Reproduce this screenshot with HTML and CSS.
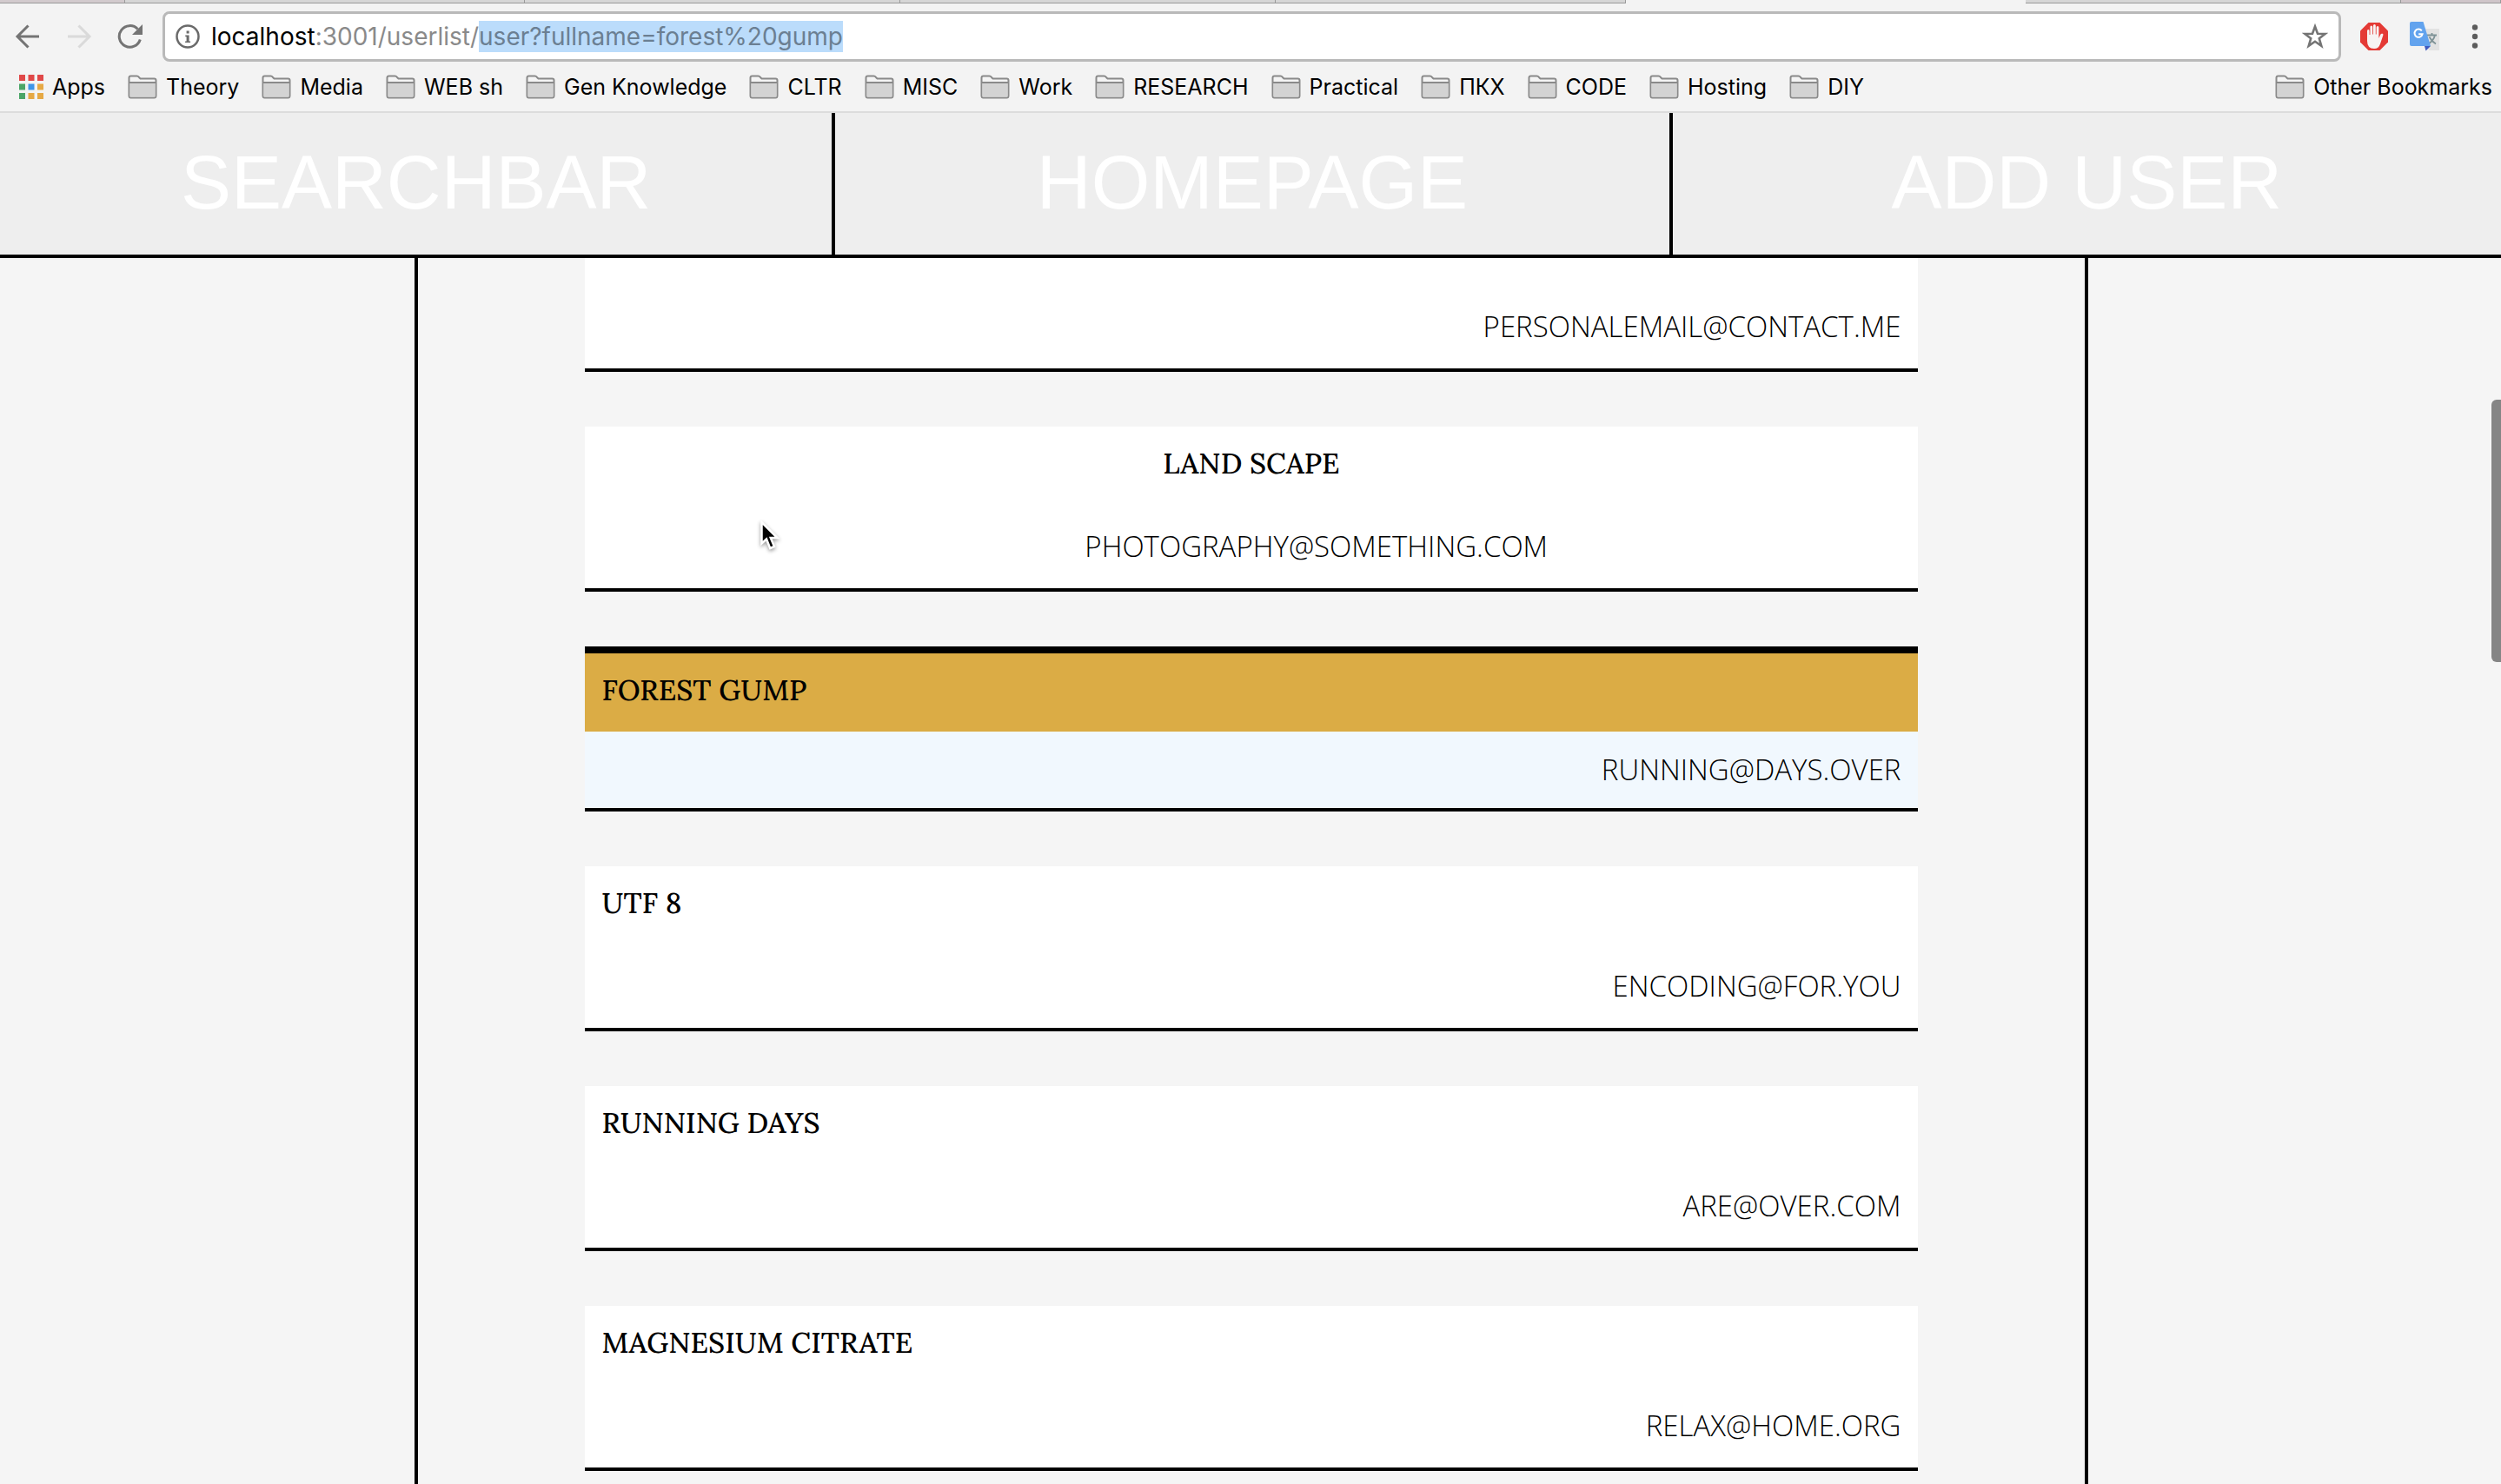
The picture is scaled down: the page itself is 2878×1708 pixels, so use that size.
FILE: index.html
```html
<!DOCTYPE html>
<html lang="en">
<head>
<meta charset="utf-8">
<title>User list</title>
<link rel="stylesheet" href="styles.css">
</head>
<body>
<svg width="0" height="0" class="sprite" aria-hidden="true">
  <symbol id="folder" viewBox="0 0 34 28">
    <path d="M1.5 24V3.5Q1.5 1.5 3.5 1.5H10.500Q12 1.500 13 3L14.500 4.500H30.500Q32.500 4.500 32.500 6.500V24Q32.500 26.500 30.500 26.500H3.500Q1.500 26.500 1.500 24Z" fill="#f4f4f4" stroke="#8a8a8a" stroke-width="2"/>
    <path d="M2.500 9.500H31.500V25.500H2.500Z" fill="#d3d3d3"/>
    <path d="M2 9H32" stroke="#8a8a8a" stroke-width="2"/>
  </symbol>
</svg>

<header class="browser">
  <div class="tabs">
    <span class="tab tab-pinned"></span><span class="tab tab-wide"></span><span class="tab tab-mid"></span><span class="tab tab-mid"></span><span class="tab tab-last"></span><span class="tab-active"></span><span class="tab tab-mid"></span><span class="tab tab-end"></span>
  </div>
  <div class="toolbar">
    <button class="icon-button" aria-label="Back">
      <svg width="30" height="30" viewBox="0 0 30 30" fill="none" stroke="#747474" stroke-width="3"><path d="M28 15H3M15.500 2.500L3 15L15.500 27.500"/></svg>
    </button>
    <button class="icon-button" aria-label="Forward" disabled>
      <svg width="30" height="30" viewBox="0 0 30 30" fill="none" stroke="#dadada" stroke-width="3"><path d="M2 15H27M14.500 2.500L27 15L14.500 27.500"/></svg>
    </button>
    <button class="icon-button" aria-label="Reload">
      <svg width="30" height="30" viewBox="0 0 30 30"><path d="M26.300 18.500A12.300 12.300 0 1 1 23.500 6.500" fill="none" stroke="#747474" stroke-width="3"/><path d="M29 1V13H17Z" fill="#747474"/></svg>
    </button>
    <div class="omnibox">
      <svg width="28" height="28" viewBox="0 0 28 28"><circle cx="14" cy="14" r="12.500" fill="none" stroke="#6a6a6a" stroke-width="2.500"/><path d="M12.600 7.500h3v3h-3zM11.300 12.500h4.300v7h1.500v1.500h-6v-1.500h1.500v-5.300h-1.300z" fill="#6a6a6a"/></svg>
      <div class="address" role="textbox" contenteditable="true" spellcheck="false" aria-label="Address"><span class="host">localhost</span>:3001/userlist/<mark class="selected">user?fullname=forest%20gump</mark></div>
      <button class="star" aria-label="Bookmark this page">
        <svg width="30" height="30" viewBox="0 0 30 30"><path d="M15 3.500L18 11.700L26.700 12L19.800 17.300L22.300 25.800L15 20.800L7.700 25.800L10.200 17.300L3.300 12L12 11.700Z" fill="none" stroke="#747474" stroke-width="2.600"/></svg>
      </button>
    </div>
    <div class="extensions">
      <button class="icon-button" aria-label="Ad blocker">
        <svg width="32" height="32" viewBox="0 0 32 32"><path d="M9.500 0h13L32 9.500v13L22.500 32h-13L0 22.500v-13Z" fill="#e43a35"/><path d="M8 21V9.500q0-1.500 1.300-1.500t1.300 1.500V14h.8V5q0-1.500 1.400-1.500T14.200 5v8.500h.8V3.500Q15 2 16.400 2t1.400 1.500v10h.8V5.500Q18.600 4 20 4t1.400 1.500V18l1.800-4q.8-1.800 2.600-1.200q1 .5.500 2L23 24.500q-1.700 5.500-7 5.500Q8 30 8 21Z" fill="#f7f3f2"/></svg>
      </button>
      <button class="icon-button" aria-label="Translate">
        <svg width="34" height="34" viewBox="0 0 34 34"><path d="M12 8H34V33H22Z" fill="#e2e2e2"/><path d="M20 15.500H31M25.500 13v2.500M29 15.500Q27.500 22 20.500 26M22.500 17.500Q25 22.500 30 25.500" fill="none" stroke="#7e9296" stroke-width="1.800"/><path d="M17 28H24L18.500 33.500Z" fill="#3f5cc0"/><path d="M0 2Q0 0 2 0H15.500L24 28H2Q0 28 0 26Z" fill="#62a3ee"/><path d="M13.800 10.400A4.600 4.600 0 1 0 14.600 14.300H10.200" fill="none" stroke="#fff" stroke-width="2"/></svg>
      </button>
    </div>
    <button class="icon-button menu" aria-label="Menu">
      <svg width="8" height="28" viewBox="0 0 8 28" fill="#5c5c5c"><circle cx="4" cy="3.500" r="3.200"/><circle cx="4" cy="14" r="3.200"/><circle cx="4" cy="24.500" r="3.200"/></svg>
    </button>
  </div>
  <nav class="bookmarks" aria-label="Bookmarks">
    <a href="#" class="bookmark"><svg width="28" height="28" viewBox="0 0 28 28"><path d="M0 0h7v7H0zM10.500 0h7v7h-7zM21 0h7v7h-7z" fill="#e04848"/><path d="M0 10.500h7v7H0zM0 21h7v7H0z" fill="#4ba567"/><path d="M10.500 10.500h7v7h-7z" fill="#3f95e8"/><path d="M21 10.500h7v7h-7zM10.500 21h7v7h-7zM21 21h7v7h-7z" fill="#e6a945"/></svg>Apps</a>
    <a href="#" class="bookmark"><svg width="34" height="28"><use href="#folder"/></svg>Theory</a>
    <a href="#" class="bookmark"><svg width="34" height="28"><use href="#folder"/></svg>Media</a>
    <a href="#" class="bookmark"><svg width="34" height="28"><use href="#folder"/></svg>WEB sh</a>
    <a href="#" class="bookmark"><svg width="34" height="28"><use href="#folder"/></svg>Gen Knowledge</a>
    <a href="#" class="bookmark"><svg width="34" height="28"><use href="#folder"/></svg>CLTR</a>
    <a href="#" class="bookmark"><svg width="34" height="28"><use href="#folder"/></svg>MISC</a>
    <a href="#" class="bookmark"><svg width="34" height="28"><use href="#folder"/></svg>Work</a>
    <a href="#" class="bookmark"><svg width="34" height="28"><use href="#folder"/></svg>RESEARCH</a>
    <a href="#" class="bookmark"><svg width="34" height="28"><use href="#folder"/></svg>Practical</a>
    <a href="#" class="bookmark"><svg width="34" height="28"><use href="#folder"/></svg>ПКХ</a>
    <a href="#" class="bookmark"><svg width="34" height="28"><use href="#folder"/></svg>CODE</a>
    <a href="#" class="bookmark"><svg width="34" height="28"><use href="#folder"/></svg>Hosting</a>
    <a href="#" class="bookmark"><svg width="34" height="28"><use href="#folder"/></svg>DIY</a>
    <a href="#" class="bookmark bookmark-other"><svg width="34" height="28"><use href="#folder"/></svg>Other Bookmarks</a>
  </nav>
</header>

<nav class="site-nav" aria-label="Site">
  <a href="#" class="site-link">SEARCHBAR</a>
  <a href="#" class="site-link site-link-middle">HOMEPAGE</a>
  <a href="#" class="site-link">ADD USER</a>
</nav>

<main class="page">
  <ul class="users">
    <li class="card card-first"><p class="email">PERSONALEMAIL@CONTACT.ME</p></li>
    <li class="card card-moving"><h2 class="name">LAND SCAPE</h2><p class="email">PHOTOGRAPHY@SOMETHING.COM</p></li>
    <li class="card card-found"><h2 class="name">FOREST GUMP</h2><p class="email">RUNNING@DAYS.OVER</p></li>
    <li class="card"><h2 class="name">UTF 8</h2><p class="email">ENCODING@FOR.YOU</p></li>
    <li class="card"><h2 class="name">RUNNING DAYS</h2><p class="email">ARE@OVER.COM</p></li>
    <li class="card"><h2 class="name">MAGNESIUM CITRATE</h2><p class="email">RELAX@HOME.ORG</p></li>
  </ul>
</main>

<div class="scroll-thumb"></div>
<svg class="pointer" width="30" height="40" viewBox="0 0 30 40" aria-hidden="true"><path d="M2.500 2V26.500L8 21.500L12.200 32L17 30L12.800 20H20.500Z" fill="#000" stroke="#fff" stroke-width="2.500"/></svg>
</body>
</html>
```

FILE: styles.css
```css
* {
  box-sizing: border-box;
}

body {
  margin: 0;
  min-height: 100vh;
  display: flex;
  flex-direction: column;
  position: relative;
  overflow: hidden;
  background: #f5f5f5;
  color: #000;
  font-family: "Liberation Sans", Arial, sans-serif;
}

.sprite {
  position: absolute;
}

svg {
  display: block;
  flex: none;
}

button {
  margin: 0;
  padding: 0;
  border: 0;
  background: none;
}

a {
  color: inherit;
  text-decoration: none;
}

/* Browser window */

.browser {
  background: #f3f3f3;
  border-bottom: 2px solid #dcdcdc;
  font-family: Inter, "Noto Sans", sans-serif;
}

.tabs {
  display: flex;
  height: 4px;
}

.tab {
  background: #d6d6d6;
  border-bottom: 1px solid #9a9a9a;
  border-right: 1px solid #9a9a9a;
}

.tab-pinned {
  width: 5%;
  background: #d2cacd;
}

.tab-wide {
  width: 16%;
}

.tab-mid {
  width: 15%;
}

.tab-last {
  flex: 1;
}

.tab-active {
  width: 16%;
}

.tab-end {
  width: 4%;
  background: #cfc5c9;
}

.toolbar {
  display: flex;
  align-items: center;
  padding: 9px 26px 0 17px;
  gap: 29px;
}

.omnibox {
  flex: 1;
  display: flex;
  align-items: center;
  gap: 13px;
  height: 58px;
  margin: 0 -7px;
  padding: 0 12px;
  background: #fff;
  border: 3px solid #b9b9b9;
  border-radius: 8px;
}

.address {
  flex: 1;
  font-size: 28px;
  line-height: 36px;
  color: #8a8a8a;
  white-space: nowrap;
  outline: 0;
}

.host {
  color: #000;
}

.selected {
  display: inline-block;
  background: #bbdcfb;
  color: #6b7f92;
}

.extensions {
  display: flex;
  align-items: center;
  gap: 25px;
  padding-right: 8px;
}

.bookmarks {
  display: flex;
  gap: 26px;
  height: 57px;
  padding: 0 10px 0 22px;
}

.bookmark {
  display: flex;
  align-items: center;
  gap: 10px;
  font-size: 25px;
  line-height: 32px;
  white-space: nowrap;
}

.bookmark-other {
  margin-left: auto;
}

/* Site header */

.site-nav {
  display: grid;
  grid-template-columns: calc(33.333% - 2px) calc(33.333% + 8px) 1fr;
  background: #eee;
  border-bottom: 4px solid #000;
}

.site-link {
  padding: 30px 0 33px;
  color: #fff;
  font-size: 87px;
  line-height: 100px;
  text-align: center;
}

.site-link-middle {
  border: solid #000;
  border-width: 0 4px;
}

/* User list */

.page {
  flex: 1;
  width: calc(66.667% + 8px);
  margin-left: calc(16.667% - 3px);
  border: solid #000;
  border-width: 0 4px;
}

.users {
  display: flex;
  flex-direction: column;
  gap: 63px;
  width: 80%;
  margin: 0 auto;
  padding: 0;
  list-style: none;
}

.card {
  display: flex;
  flex-direction: column;
  gap: 56px;
  padding: 22px 20px 28px;
  background: #fff;
  border-bottom: 4px solid #000;
}

.name,
.email {
  margin: 0;
  font-size: 33px;
  line-height: 40px;
}

.name {
  font-family: Lora, "Liberation Serif", serif;
  font-weight: 500;
}

.email {
  font-family: "Open Sans", sans-serif;
  font-weight: 300;
  text-align: right;
}

.card-first {
  padding-top: 59px;
}

.card-moving {
  text-align: center;
}

.card-moving .email {
  padding-left: 10%;
  text-align: center;
}

.card-found {
  gap: 0;
  padding: 0;
  border-top: 8px solid #000;
  background: #f1f8fe;
}

.card-found .name {
  padding: 22px 20px 28px;
  background: #dbac45;
}

.card-found .email {
  padding: 24px 20px;
}

/* Overlays */

.scroll-thumb {
  position: absolute;
  top: 460px;
  right: 0;
  width: 11px;
  height: 302px;
  background: #858585;
  border-radius: 6px 0 0 6px;
}

.pointer {
  position: absolute;
  top: 599px;
  left: 874px;
  filter: drop-shadow(0 2px 2px rgba(0, 0, 0, 0.4));
}
```
